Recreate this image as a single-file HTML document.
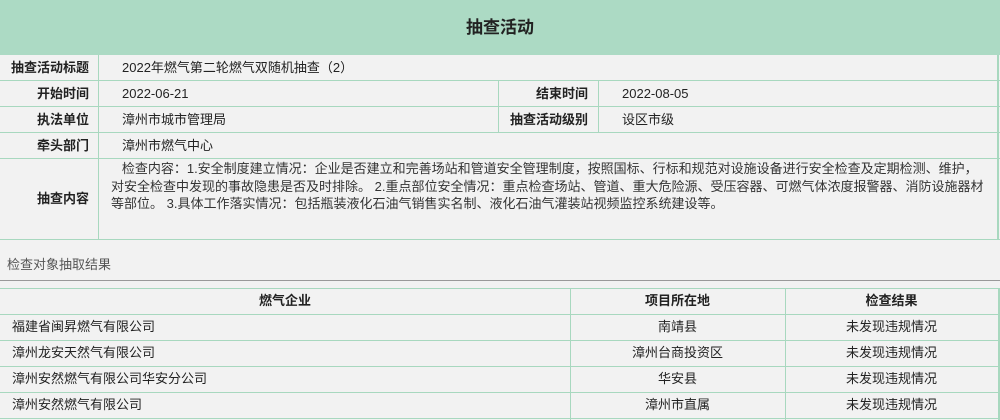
<!DOCTYPE html>
<html><head><meta charset="utf-8"><style>
*{margin:0;padding:0;box-sizing:border-box}
body{width:1000px;height:420px;background:#f2f2f2;font-family:"Liberation Sans","Noto Sans CJK SC",sans-serif;font-size:13px;color:#222;overflow:hidden;position:relative}
.hd{position:absolute;left:0;top:0;width:1000px;height:55px;background:#acdac4;text-align:center;line-height:55px;font-size:17px;font-weight:bold;color:#222}
.a{position:absolute;border-color:#a8d8bf;border-style:solid;border-width:0}
.t{position:absolute;white-space:nowrap;line-height:26px}
.b{font-weight:bold}
</style></head><body>
<div class="hd">抽查活动</div>
<div class="a" style="left:0;top:55px;width:999px;height:185px;border-right-width:2px"></div>
<div class="a" style="left:0;top:80px;width:1000px;border-top-width:1px"></div>
<div class="a" style="left:0;top:106px;width:1000px;border-top-width:1px"></div>
<div class="a" style="left:0;top:132px;width:1000px;border-top-width:1px"></div>
<div class="a" style="left:0;top:158px;width:1000px;border-top-width:1px"></div>
<div class="a" style="left:0;top:239px;width:1000px;border-top-width:1px"></div>
<div class="a" style="left:98px;top:55px;height:184px;border-left-width:1px"></div>
<div class="a" style="left:498px;top:80px;height:52px;border-left-width:1px"></div>
<div class="a" style="left:598px;top:80px;height:52px;border-left-width:1px"></div>
<div class="t b" style="right:911px;top:55px">抽查活动标题</div>
<div class="t" style="left:122px;top:55px">2022年燃气第二轮燃气双随机抽查（2）</div>
<div class="t b" style="right:911px;top:81px">开始时间</div>
<div class="t" style="left:122px;top:81px">2022-06-21</div>
<div class="t b" style="right:412px;top:81px">结束时间</div>
<div class="t" style="left:622px;top:81px">2022-08-05</div>
<div class="t b" style="right:911px;top:107px">执法单位</div>
<div class="t" style="left:122px;top:107px">漳州市城市管理局</div>
<div class="t b" style="right:412px;top:107px">抽查活动级别</div>
<div class="t" style="left:622px;top:107px">设区市级</div>
<div class="t b" style="right:911px;top:133px">牵头部门</div>
<div class="t" style="left:122px;top:133px">漳州市燃气中心</div>
<div class="t b" style="right:911px;top:186px">抽查内容</div>
<div style="position:absolute;left:111px;top:160px;white-space:nowrap;line-height:17.5px;color:#333">&nbsp;&nbsp;&nbsp;检查内容：1.安全制度建立情况：企业是否建立和完善场站和管道安全管理制度，按照国标、行标和规范对设施设备进行安全检查及定期检测、维护，<br>对安全检查中发现的事故隐患是否及时排除。 2.重点部位安全情况：重点检查场站、管道、重大危险源、受压容器、可燃气体浓度报警器、消防设施器材<br>等部位。 3.具体工作落实情况：包括瓶装液化石油气销售实名制、液化石油气灌装站视频监控系统建设等。</div>
<div class="t" style="left:7px;top:252px;color:#555">检查对象抽取结果</div>
<div style="position:absolute;left:0;top:280px;width:1000px;border-top:1px solid #999"></div>
<div class="a" style="left:0;top:288px;width:1000px;border-top-width:1px"></div>
<div class="a" style="left:0;top:314px;width:1000px;border-top-width:1px"></div>
<div class="a" style="left:0;top:340px;width:1000px;border-top-width:1px"></div>
<div class="a" style="left:0;top:366px;width:1000px;border-top-width:1px"></div>
<div class="a" style="left:0;top:392px;width:1000px;border-top-width:1px"></div>
<div class="a" style="left:0;top:418px;width:1000px;border-top-width:1px"></div>
<div class="a" style="left:570px;top:288px;height:132px;border-left-width:1px"></div>
<div class="a" style="left:785px;top:288px;height:132px;border-left-width:1px"></div>
<div class="a" style="left:998px;top:288px;height:132px;border-left-width:2px"></div>
<div class="t b" style="left:0;width:570px;text-align:center;top:288px">燃气企业</div>
<div class="t b" style="left:570px;width:215px;text-align:center;top:288px">项目所在地</div>
<div class="t b" style="left:785px;width:213px;text-align:center;top:288px">检查结果</div>
<div class="t" style="left:12px;top:314px">福建省闽昇燃气有限公司</div>
<div class="t" style="left:12px;top:340px">漳州龙安天然气有限公司</div>
<div class="t" style="left:12px;top:366px">漳州安然燃气有限公司华安分公司</div>
<div class="t" style="left:12px;top:392px">漳州安然燃气有限公司</div>
<div class="t" style="left:570px;width:215px;text-align:center;top:314px">南靖县</div>
<div class="t" style="left:570px;width:215px;text-align:center;top:340px">漳州台商投资区</div>
<div class="t" style="left:570px;width:215px;text-align:center;top:366px">华安县</div>
<div class="t" style="left:570px;width:215px;text-align:center;top:392px">漳州市直属</div>
<div class="t" style="left:785px;width:213px;text-align:center;top:314px">未发现违规情况</div>
<div class="t" style="left:785px;width:213px;text-align:center;top:340px">未发现违规情况</div>
<div class="t" style="left:785px;width:213px;text-align:center;top:366px">未发现违规情况</div>
<div class="t" style="left:785px;width:213px;text-align:center;top:392px">未发现违规情况</div>
</body></html>
